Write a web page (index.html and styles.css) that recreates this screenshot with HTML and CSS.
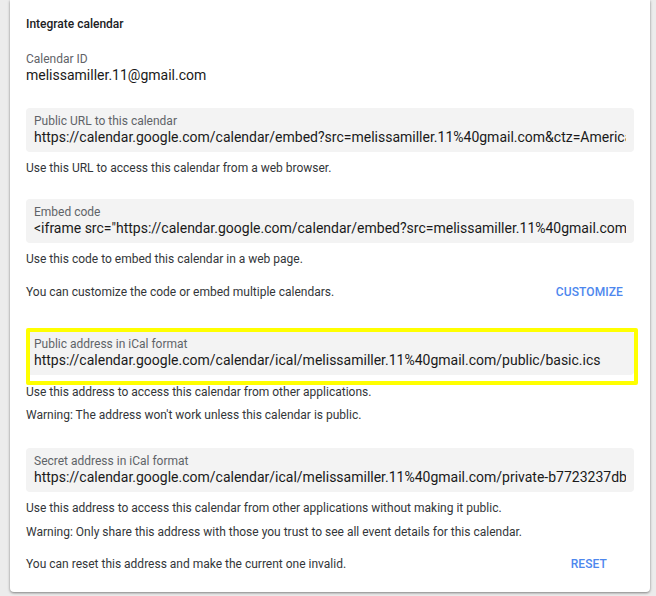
FILE: index.html
```html
<!DOCTYPE html>
<html>
<head>
<meta charset="utf-8">
<link rel="stylesheet" href="styles.css">
</head>
<body>
<div class="card">
  <div class="title">Integrate calendar</div>

  <div class="plain">
    <div class="label">Calendar ID</div>
    <div class="value">melissamiller.11@gmail.com</div>
  </div>

  <div class="field f1">
    <div class="label">Public URL to this calendar</div>
    <div class="value">https://calendar.google.com/calendar/embed?src=melissamiller.11%40gmail.com&amp;ctz=America%2FNew_York</div>
  </div>
  <p class="help h-first">Use this URL to access this calendar from a web browser.</p>

  <div class="field f2">
    <div class="label">Embed code</div>
    <div class="value">&lt;iframe src="https://calendar.google.com/calendar/embed?src=melissamiller.11%40gmail.com&amp;ctz=America%2FNew_York" style="border: 0" width="800" height="600" frameborder="0" scrolling="no"&gt;&lt;/iframe&gt;</div>
  </div>
  <p class="help h-first">Use this code to embed this calendar in a web page.</p>
  <div class="action-row ar1">
    <p class="help">You can customize the code or embed multiple calendars.</p>
    <span class="btn btn-customize">CUSTOMIZE</span>
  </div>

  <div class="highlight-wrap">
    <div class="field f3">
      <div class="label">Public address in iCal format</div>
      <div class="value">https://calendar.google.com/calendar/ical/melissamiller.11%40gmail.com/public/basic.ics</div>
    </div>
    <div class="highlight"></div>
  </div>
  <p class="help h-after-hl">Use this address to access this calendar from other applications.</p>
  <p class="help h-next">Warning: The address won't work unless this calendar is public.</p>

  <div class="field f4">
    <div class="label">Secret address in iCal format</div>
    <div class="value">https://calendar.google.com/calendar/ical/melissamiller.11%40gmail.com/private-b7723237db4e1c3f0a9e2d5b/basic.ics</div>
  </div>
  <p class="help h-first">Use this address to access this calendar from other applications without making it public.</p>
  <p class="help h-next2">Warning: Only share this address with those you trust to see all event details for this calendar.</p>
  <div class="action-row ar2">
    <p class="help">You can reset this address and make the current one invalid.</p>
    <span class="btn btn-reset">RESET</span>
  </div>
</div>
</body>
</html>
```

FILE: styles.css
```css
html, body {
  margin: 0;
  padding: 0;
}
body {
  background: #ececec;
  font-family: Roboto, "Liberation Sans", Arial, sans-serif;
  padding: 0 6px 0 10px;
  height: 596px;
  overflow: hidden;
}
.card {
  background: #fff;
  width: 640px;
  box-sizing: border-box;
  padding: 16px 16px 20px 16px;
  border-radius: 0 0 4px 4px;
  box-shadow: 0 1px 3px rgba(0,0,0,0.35), 0 1px 2px rgba(0,0,0,0.15);
}
.title {
  font-size: 12px;
  font-weight: 500;
  line-height: 16px;
  color: #202124;
}
.plain {
  margin-top: 19px;
}
.label {
  font-size: 12px;
  line-height: 16px;
  color: #5f6368;
}
.value {
  font-size: 14px;
  line-height: 16px;
  color: #1a1a1a;
  white-space: nowrap;
  overflow: hidden;
}
.field {
  background: #f3f3f3;
  border-radius: 4px;
  padding: 5px 8px 7px 8px;
  width: 608px;
  box-sizing: border-box;
}
.f1 { margin-top: 25px; }
.f2 { margin-top: 23px; }
.f4 { margin-top: 25px; }
.help {
  margin: 0;
  font-size: 12px;
  line-height: 16px;
  color: #333639;
}
.h-first { margin-top: 8px; }
.h-after-hl { margin-top: 9px; }
.h-next { margin-top: 7px; }
.h-next2 { margin-top: 8px; }
.action-row {
  display: flex;
  justify-content: space-between;
  align-items: center;
  width: 608px;
}
.ar1 { margin-top: 17px; }
.ar2 { margin-top: 16px; }
.btn {
  font-size: 12px;
  font-weight: 500;
  line-height: 16px;
  color: #4d87ee;
  letter-spacing: 0.1px;
}
.btn-customize { margin-right: 11px; }
.btn-reset { margin-right: 27px; }
.highlight-wrap {
  position: relative;
  margin-top: 31px;
}
.highlight {
  position: absolute;
  left: 0;
  top: -3px;
  width: 612px;
  height: 57px;
  box-sizing: border-box;
  border: 4px solid #ffff00;
  border-radius: 2px;
  pointer-events: none;
}
```
